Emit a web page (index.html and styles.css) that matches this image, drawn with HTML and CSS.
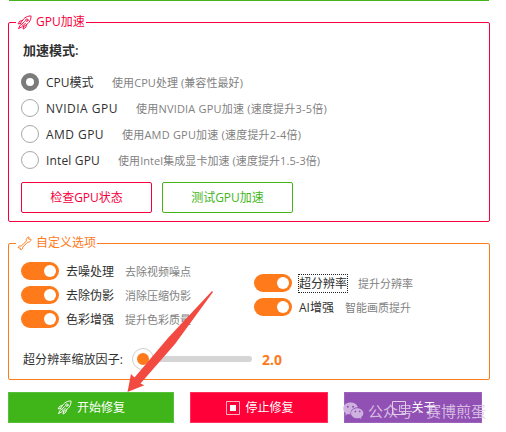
FILE: index.html
```html
<!DOCTYPE html>
<html lang="zh-CN">
<head>
<meta charset="utf-8">
<title>GPU加速</title>
<link rel="stylesheet" href="styles.css">
</head>
<body>
<svg width="0" height="0" class="defs">
  <symbol id="rocket" viewBox="0 0 16 16">
    <g fill="none" stroke="currentColor" stroke-width="1" stroke-linejoin="round" stroke-linecap="round">
      <path d="M4 8.500C6.500 4 9.500 1 15 1C15 6.500 12 9.500 7.500 12Z"/>
      <path d="M6 6L3 6.500L1.200 9.500L4 9M10 10.500L9.500 13L6.500 15L7 12"/>
      <circle cx="10.500" cy="5.500" r="1.300"/>
      <path d="M3.700 10.500L1.500 14.500L5.500 12.500M5.500 9.500L8 7M7 10.500L9 9"/>
    </g>
  </symbol>
  <symbol id="wrench" viewBox="0 0 16 16">
    <path fill="none" stroke="currentColor" stroke-width="1" stroke-linejoin="round" d="M9.800 5.500C9.500 3 11 1.200 12.800 1L12.500 3.300L15 3.500C15 5.500 13.200 7 11.200 6.700L6 12C6.500 13.500 5 15 3.500 14.500L3.500 12.800L1.200 12.500C1.200 11 3 10 4.500 10.800Z"/>
  </symbol>
</svg>
<main class="page">
  <section class="group gpu">
    <h2 class="legend"><svg class="icon"><use href="#rocket"/></svg><span>GPU加速</span></h2>
    <h3 class="mode-title">加速模式:</h3>
    <div class="radios">
      <label class="radio"><i class="dot on"></i><span class="name cpu">CPU模式</span><span class="desc">使用CPU处理 (兼容性最好)</span></label>
      <label class="radio"><i class="dot"></i><span class="name nv">NVIDIA GPU</span><span class="desc wide">使用NVIDIA GPU加速 (速度提升3-5倍)</span></label>
      <label class="radio"><i class="dot"></i><span class="name amd">AMD GPU</span><span class="desc wide">使用AMD GPU加速 (速度提升2-4倍)</span></label>
      <label class="radio"><i class="dot"></i><span class="name intel">Intel GPU</span><span class="desc">使用Intel集成显卡加速 (速度提升1.5-3倍)</span></label>
    </div>
    <div class="tools">
      <button class="outline red">检查GPU状态</button>
      <button class="outline green">测试GPU加速</button>
    </div>
  </section>
  <section class="group custom">
    <h2 class="legend"><svg class="icon"><use href="#wrench"/></svg><span>自定义选项</span></h2>
    <div class="options">
      <div class="column">
        <label class="option"><i class="toggle"></i><span class="name">去噪处理</span><span class="desc">去除视频噪点</span></label>
        <label class="option"><i class="toggle"></i><span class="name">去除伪影</span><span class="desc">消除压缩伪影</span></label>
        <label class="option"><i class="toggle"></i><span class="name">色彩增强</span><span class="desc">提升色彩质量</span></label>
      </div>
      <div class="column">
        <label class="option"><i class="toggle"></i><span class="name focused">超分辨率</span><span class="desc">提升分辨率</span></label>
        <label class="option"><i class="toggle"></i><span class="name">AI增强</span><span class="desc">智能画质提升</span></label>
      </div>
    </div>
    <div class="scale">
      <span class="scale-label">超分辨率缩放因子:</span>
      <div class="slider"><i class="knob"></i><i class="track"></i></div>
      <b class="value">2.0</b>
    </div>
  </section>
  <footer class="actions">
    <button class="action start"><svg class="icon"><use href="#rocket"/></svg><span>开始修复</span></button>
    <button class="action stop"><svg class="icon square" viewBox="0 0 14 14"><path fill="none" stroke="#ffb3c5" d="M.5.5h13v13H.5z"/><path fill="#fff" d="M4 4h6v6H4z"/></svg><span>停止修复</span></button>
    <button class="action about"><svg class="icon square" viewBox="0 0 14 14"><path fill="none" stroke="#e2cdeb" d="M.5.5h13v13H.5z"/><path fill="none" stroke="#d5b8e3" d="M7.500 4v6"/></svg><span>关于</span></button>
  </footer>
</main>
<svg class="arrow" viewBox="0 0 90 106"><path fill="#f24a40" d="M2.500 102L6 84L9.500 87.500L43 48L87 1L88 2L50 54L15.500 93.500L19.300 95.300Z"/></svg>
<div class="watermark"><svg class="wechat" viewBox="0 0 22 18"><path fill="#d9c3e6" d="M8 0C3.500 0 0 2.800 0 6.400c0 2 1.200 3.700 3 4.900l-.7 2.300 2.700-1.400c.9.200 1.800.4 2.800.4C7.500 8 11 5 15.500 5 14.800 2 11.700 0 8 0Z"/><path fill="#d9c3e6" d="M15 6c-3.800 0-6.600 2.300-6.600 5.300s2.900 5.300 6.600 5.300c.8 0 1.500-.1 2.200-.3l2.200 1.200-.6-1.900c1.500-1 2.500-2.500 2.500-4.300C21.300 8.300 18.500 6 15 6Z"/><g fill="#9050b0"><circle cx="5" cy="4.500" r="1"/><circle cx="10.500" cy="4.500" r="1"/><circle cx="13" cy="9.500" r=".9"/><circle cx="17.500" cy="9.500" r=".9"/></g></svg><span class="account">公众号</span><span class="dotsep">·</span><span>赛博煎蛋</span></div>
</body>
</html>
```

FILE: styles.css
```css
* { box-sizing: border-box; }
body {
  margin: 0;
  width: 506px;
  height: 432px;
  overflow: hidden;
  background: #fff;
  color: #303030;
  font: 12px/16px "Open Sans", "Noto Sans CJK SC", sans-serif;
}
.defs { position: absolute; }
h2, h3 { margin: 0; font-weight: 400; font-size: 12px; }
i { display: block; flex: none; }
button { font: inherit; padding: 0; margin: 0; }
span { white-space: nowrap; }
.page {
  width: 482px;
  margin-left: 8px;
  padding-top: 22px;
  background: linear-gradient(#43b51b, #43b51b) 1px 0 / 480px 1px no-repeat;
}
.group { border: 1px solid; border-radius: 2px; }
.gpu { height: 200px; border-color: #f5003d; }
.custom { height: 137px; margin-top: 21px; border-color: #ff7a1a; }
.legend {
  display: flex;
  align-items: center;
  gap: 4px;
  width: max-content;
  height: 16px;
  margin: -9px 0 0 7px;
  padding: 0 1px;
  background: #fff;
}
.gpu .legend { color: #f5003d; }
.custom .legend { color: #ff7a1a; }
.icon { display: block; width: 15px; height: 15px; flex: none; }
.mode-title { margin: 12px 0 0 14px; font-weight: 600; font-size: 13px; }
.radios { margin: 11px 0 0 12px; }
.radio { display: flex; align-items: center; height: 26px; }
.radio .name { margin: 0 18px 0 7px; padding-top: 1px; }
.radio .cpu { width: 48px; }
.radio .nv { width: 72px; letter-spacing: .5px; }
.radio .amd { width: 58px; letter-spacing: .45px; }
.radio .intel { width: 54px; letter-spacing: .15px; }
.dot { width: 18px; height: 18px; border: 1px solid #a8a8a8; border-radius: 50%; }
.dot.on { border: 5px solid #7b7b7b; }
.desc { padding-top: 2px; color: #818181; font-size: 11px; }
.radio .desc { letter-spacing: .07px; }
.radio .wide { letter-spacing: .2px; }
.tools { display: flex; gap: 10px; margin: 9px 0 0 12px; }
.outline { width: 131px; height: 31px; padding-top: 1px; border: 1px solid; border-radius: 2px; background: #fff; }
.red { color: #f5003d; }
.green { color: #43b51b; }
.options { display: flex; align-items: center; margin: 8px 0 0 12px; }
.column:first-child { width: 233px; }
.option { display: flex; align-items: center; height: 24px; }
.toggle { display: flex; align-items: center; justify-content: flex-end; width: 38px; height: 18px; padding-right: 3px; border-radius: 9px; background: #ff7a1a; }
.toggle::after { content: ""; width: 12px; height: 12px; border-radius: 50%; background: #fff; }
.option .name { margin: 0 11px 0 7px; padding-top: 1px; }
.option .focused { width: 50px; height: 19px; margin: 0 10px 0 6px; border: 1px dotted #222; }
.scale { display: flex; align-items: center; height: 24px; margin: 16px 0 0 14px; }
.scale-label { width: 109px; padding-top: 1px; letter-spacing: .1px; }
.slider { display: flex; align-items: center; width: 120px; }
.knob { width: 22px; height: 22px; border: 5px solid #fff; border-radius: 50%; background: #ff7a1a; outline: 1px solid #d0d0d0; outline-offset: -1px; }
.track { flex: 1; height: 6px; border-radius: 0 3px 3px 0; background: #d5d5d5; }
.value { margin-left: 10px; padding-top: 1px; color: #ff7a1a; font-size: 14px; }
.actions { display: flex; gap: 16px; margin-top: 12px; }
.action { display: flex; align-items: center; justify-content: center; gap: 5px; width: 138px; height: 31px; border: 1px solid; color: #fff; }
.action span { padding-top: 1px; }
.start { width: 166px; background: #40b51a; border-color: #58bf38; }
.stop { padding-left: 2px; background: #ff0039; border-color: #ff305c; }
.about { padding-left: 2px; background: #9050b4; border-color: #9c63bb; }
.square { width: 14px; height: 14px; }
.arrow { position: absolute; left: 125px; top: 290px; width: 90px; height: 106px; }
.watermark { position: absolute; left: 343px; top: 400px; display: flex; align-items: center; width: 143px; height: 22px; overflow: hidden; color: #e0cdea; font-size: 15px; line-height: 22px; opacity: .85; }
.wechat { width: 21px; height: 18px; margin-right: 4px; flex: none; }
.dotsep { width: 18px; text-align: center; }
```
